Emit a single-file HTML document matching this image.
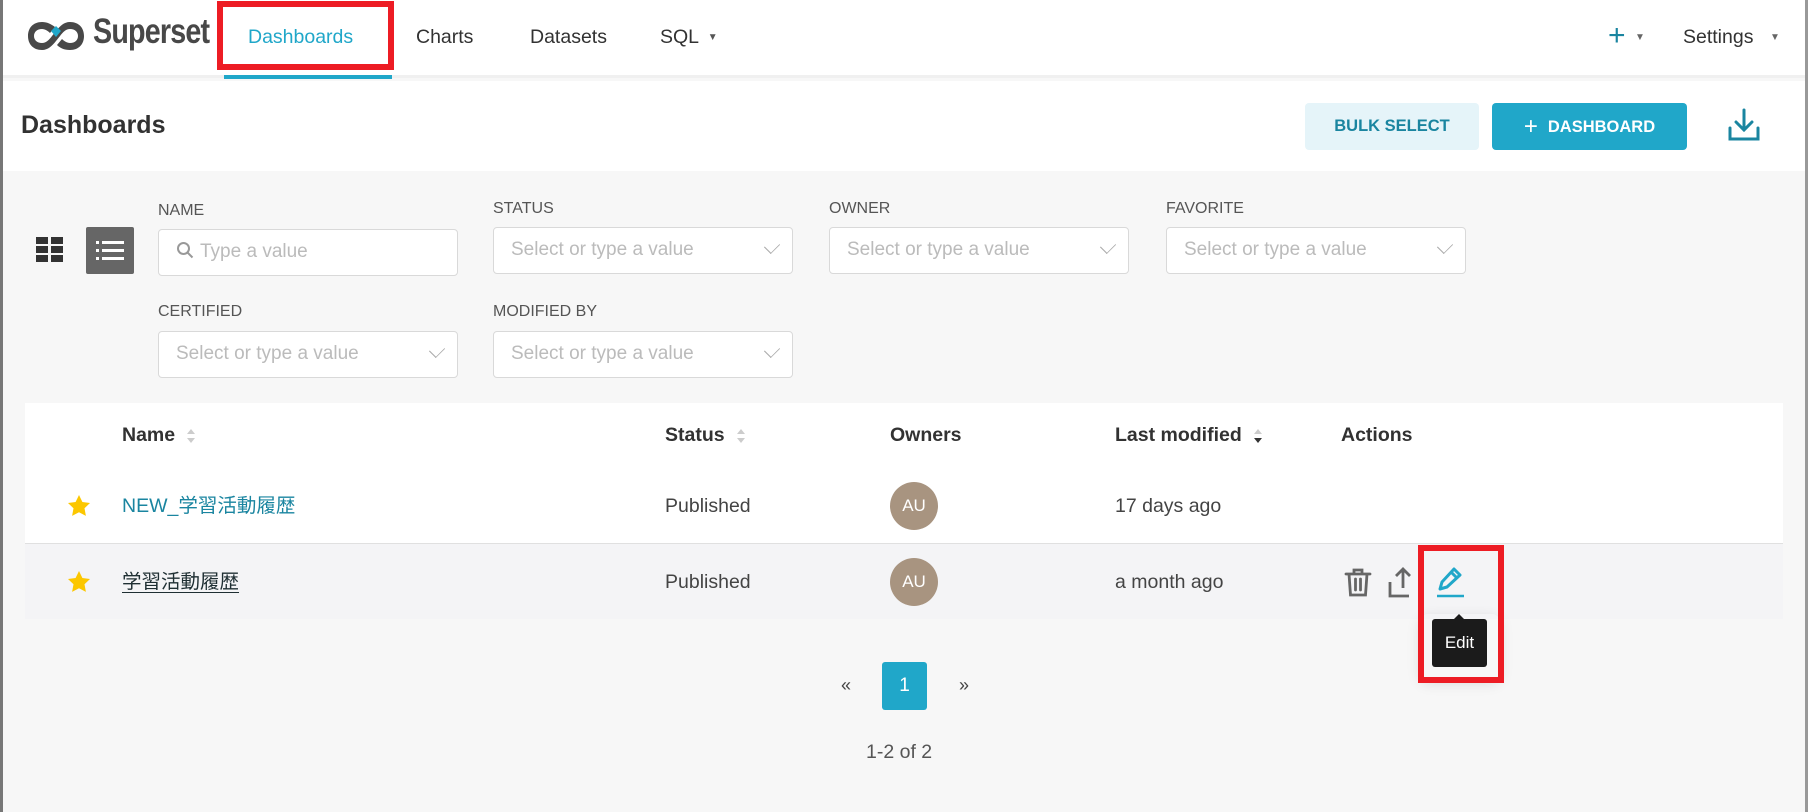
<!DOCTYPE html>
<html><head><meta charset="utf-8"><style>
*{box-sizing:border-box;margin:0;padding:0}
body{width:1808px;height:812px;overflow:hidden;background:#f7f7f7;font-family:"Liberation Sans","Noto Sans CJK JP",sans-serif;color:#323232;position:relative}
.a{position:absolute;white-space:nowrap}
.nav{position:absolute;left:0;top:0;width:1808px;height:78px;background:#fff;border-bottom:3px solid #f0f0f0}
.hdr{position:absolute;left:0;top:81px;width:1808px;height:90px;background:#fff}
.lbl{font-size:16px;color:#555}
.inp{position:absolute;height:47px;width:300px;background:#fff;border:1px solid #d9d9d9;border-radius:4px;font-size:19px;color:#bbb;padding:11px 17px}
.chev{position:absolute;right:14px;top:12px;width:12px;height:12px;border-right:1.5px solid #aaa;border-bottom:1.5px solid #aaa;transform:rotate(45deg) scale(.8,1.1)}
.th{font-size:19.5px;font-weight:bold;color:#323232}
.td{font-size:19.5px;color:#444}
.av{position:absolute;width:48px;height:48px;border-radius:50%;background:#a89480;color:#fff;font-size:17px;text-align:center;line-height:48px}
.sort{display:inline-block;width:8px;vertical-align:middle;margin-left:12px}
</style></head><body>
<div style="position:absolute;left:0;top:0;width:3px;height:812px;background:#777;z-index:5"></div>
<div style="position:absolute;right:0;top:0;width:3px;height:812px;background:#999;z-index:5"></div>
<div class="nav">
 <svg class="a" style="left:25px;top:18px" width="62" height="36" viewBox="0 0 62 36"><path d="M17 4C8 4 3 10 3 18s5 14 14 14c6 0 10-4 14-9l4-5c3-4 6-7 10-7 5 0 8 3 8 7s-3 7-8 7c-3 0-6-2-8-4l-5 6c3 3 7 5 13 5 9 0 14-6 14-14S54 4 45 4c-6 0-10 4-14 9l-4 5c-3 4-6 7-10 7-5 0-8-3-8-7s3-7 8-7c3 0 6 2 8 4l5-6C26 6 22 4 17 4z" fill="#484848"/><path d="M26 13l5 6 5-6-5-5z" fill="#20a7c9"/></svg>
 <div class="a" style="left:93px;top:12px;font-size:35px;font-weight:bold;color:#484848;letter-spacing:-1px;transform:scaleX(0.82);transform-origin:left">Superset</div>
 <div class="a" style="left:248px;top:26px;font-size:19.5px;color:#20a7c9">Dashboards</div>
 <div class="a" style="left:224px;top:75px;width:168px;height:4px;background:#20a7c9;z-index:2"></div>
 <div class="a" style="left:416px;top:26px;font-size:19.5px;color:#323232">Charts</div>
 <div class="a" style="left:530px;top:26px;font-size:19.5px;color:#323232">Datasets</div>
 <div class="a" style="left:660px;top:26px;font-size:19.5px;color:#323232">SQL <span style="font-size:10px;color:#555;margin-left:4px;vertical-align:middle">▼</span></div>
 <div class="a" style="left:1608px;top:19px;font-size:30px;color:#1a85a0">+</div>
 <div class="a" style="left:1635px;top:32px;font-size:10px;color:#666">▼</div>
 <div class="a" style="left:1683px;top:26px;font-size:19.5px;color:#323232">Settings</div>
 <div class="a" style="left:1770px;top:32px;font-size:10px;color:#666">▼</div>
</div>
<div class="a" style="left:217px;top:1px;width:177px;height:69px;border:6px solid #ed1c24;z-index:3"></div>
<div class="hdr">
 <div class="a" style="left:21px;top:30px;font-size:25px;font-weight:bold;color:#323232">Dashboards</div>
 <div class="a" style="left:1305px;top:22px;width:174px;height:47px;background:#e5f4f9;border-radius:4px;color:#1a85a0;font-size:16.5px;font-weight:bold;text-align:center;line-height:47px">BULK SELECT</div>
 <div class="a" style="left:1492px;top:22px;width:195px;height:47px;background:#20a7c9;border-radius:4px;color:#fff;font-size:16.5px;font-weight:bold;text-align:center;line-height:47px"><span style="font-size:24px;font-weight:normal;vertical-align:-2px;margin-right:10px">+</span>DASHBOARD</div>
 <svg class="a" style="left:1728px;top:27px" width="32" height="34" viewBox="0 0 32 34" fill="none" stroke="#1a85a0" stroke-width="3" stroke-linecap="round"><path d="M16 2v20M8 14l8 8 8-8M2 20v11h28V20"/></svg>
</div>
<svg class="a" style="left:36px;top:237px" width="28" height="26"><g fill="#333"><rect x="0" y="0" width="12" height="7"/><rect x="15" y="0" width="12" height="7"/><rect x="0" y="9" width="12" height="7"/><rect x="15" y="9" width="12" height="7"/><rect x="0" y="18" width="12" height="7"/><rect x="15" y="18" width="12" height="7"/></g></svg>
<div class="a" style="left:86px;top:227px;width:48px;height:47px;background:#666;border-radius:2px">
 <svg width="48" height="47"><g fill="#fff"><rect x="10" y="14" width="3" height="3"/><rect x="16" y="14" width="22" height="3"/><rect x="10" y="22" width="3" height="3"/><rect x="16" y="22" width="22" height="3"/><rect x="10" y="30" width="3" height="3"/><rect x="16" y="30" width="22" height="3"/></g></svg>
</div>
<div class="a lbl" style="left:158px;top:202px">NAME</div>
<div class="a lbl" style="left:493px;top:200px">STATUS</div>
<div class="a lbl" style="left:829px;top:200px">OWNER</div>
<div class="a lbl" style="left:1166px;top:200px">FAVORITE</div>
<div class="a lbl" style="left:158px;top:303px">CERTIFIED</div>
<div class="a lbl" style="left:493px;top:303px">MODIFIED BY</div>
<div class="inp" style="left:158px;top:229px"><svg style="vertical-align:-2px;margin-right:6px" width="18" height="18" fill="none" stroke="#999" stroke-width="2"><circle cx="7.5" cy="7.5" r="5.5"/><path d="M11.5 11.5l5 5"/></svg>Type a value</div>
<div class="inp" style="left:493px;top:227px">Select or type a value<div class="chev"></div></div>
<div class="inp" style="left:829px;top:227px">Select or type a value<div class="chev"></div></div>
<div class="inp" style="left:1166px;top:227px">Select or type a value<div class="chev"></div></div>
<div class="inp" style="left:158px;top:331px">Select or type a value<div class="chev"></div></div>
<div class="inp" style="left:493px;top:331px">Select or type a value<div class="chev"></div></div>
<div class="a" style="left:25px;top:403px;width:1758px;height:141px;background:#fff"></div>
<div class="a" style="left:25px;top:543px;width:1758px;height:1px;background:#e0e0e0"></div>
<div class="a" style="left:25px;top:544px;width:1758px;height:75px;background:#f4f4f6"></div>
<div class="a th" style="left:122px;top:424px">Name<svg class="sort" height="16" viewBox="0 0 8 16"><path d="M0 6l4-5 4 5zM0 10l4 5 4-5z" fill="#ccc"/></svg></div>
<div class="a th" style="left:665px;top:424px">Status<svg class="sort" height="16" viewBox="0 0 8 16"><path d="M0 6l4-5 4 5zM0 10l4 5 4-5z" fill="#ccc"/></svg></div>
<div class="a th" style="left:890px;top:424px">Owners</div>
<div class="a th" style="left:1115px;top:424px">Last modified<svg class="sort" height="16" viewBox="0 0 8 16"><path d="M0 6l4-5 4 5z" fill="#ccc"/><path d="M0 10l4 5 4-5z" fill="#333"/></svg></div>
<div class="a th" style="left:1341px;top:424px">Actions</div>
<svg class="a" style="left:67px;top:494px" width="24" height="23" viewBox="0 0 24 23"><path d="M12 1l3.4 7 7.6 1-5.5 5.3 1.4 7.6L12 18.3l-6.9 3.6 1.4-7.6L1 9l7.6-1z" fill="#fcc700"/></svg>
<svg class="a" style="left:67px;top:570px" width="24" height="23" viewBox="0 0 24 23"><path d="M12 1l3.4 7 7.6 1-5.5 5.3 1.4 7.6L12 18.3l-6.9 3.6 1.4-7.6L1 9l7.6-1z" fill="#fcc700"/></svg>
<div class="a td" style="left:122px;top:489px;color:#1a85a0">NEW_学習活動履歴</div>
<div class="a td" style="left:122px;top:565px;color:#1f2f33;text-decoration:underline;text-underline-offset:4px">学習活動履歴</div>
<div class="a td" style="left:665px;top:495px">Published</div>
<div class="a td" style="left:665px;top:571px">Published</div>
<div class="av" style="left:890px;top:482px">AU</div>
<div class="av" style="left:890px;top:558px">AU</div>
<div class="a td" style="left:1115px;top:495px">17 days ago</div>
<div class="a td" style="left:1115px;top:571px">a month ago</div>
<svg class="a" style="left:1344px;top:567px" width="28" height="31" viewBox="0 0 28 31" fill="none" stroke="#666" stroke-width="2.8" stroke-linecap="round"><path d="M2 7h24M10 7V3h8v4M5 7l1.5 21h15L23 7M11.5 12v11M16.5 12v11"/></svg>
<svg class="a" style="left:1388px;top:566px" width="30" height="32" viewBox="0 0 30 32" fill="none" stroke="#666" stroke-width="2.8"><path d="M15 22V3M8 10l7-7 7 7M2 16v14h19"/></svg>
<svg class="a" style="left:1436px;top:565px" width="32" height="34" viewBox="0 0 32 34" fill="none" stroke="#20a7c9" stroke-width="3" stroke-linejoin="round"><path d="M4 24l2-7L18 4l6 6L11 22z M15 7l6 6"/><path d="M1 31h27" stroke-width="2.6"/></svg>
<div class="a" style="left:1420px;top:614px;width:80px;height:65px;border-radius:8px;box-shadow:0 4px 14px rgba(0,0,0,.12)"></div>
<div class="a" style="left:1453px;top:614px;width:0;height:0;border-left:6px solid transparent;border-right:6px solid transparent;border-bottom:6px solid #1b1b1b"></div>
<div class="a" style="left:1432px;top:619px;width:55px;height:48px;background:#1b1b1b;border-radius:3px;color:#fff;font-size:17px;text-align:center;line-height:48px">Edit</div>
<div class="a" style="left:1418px;top:545px;width:86px;height:138px;border:6px solid #ed1c24;z-index:3"></div>
<div class="a" style="left:841px;top:675px;font-size:18px;color:#444">«</div>
<div class="a" style="left:882px;top:662px;width:45px;height:48px;background:#20a7c9;border-radius:3px;color:#fff;font-size:19px;text-align:center;line-height:48px">1</div>
<div class="a" style="left:959px;top:675px;font-size:18px;color:#444">»</div>
<div class="a" style="left:866px;top:741px;font-size:19.5px;color:#555">1-2 of 2</div>
</body></html>
